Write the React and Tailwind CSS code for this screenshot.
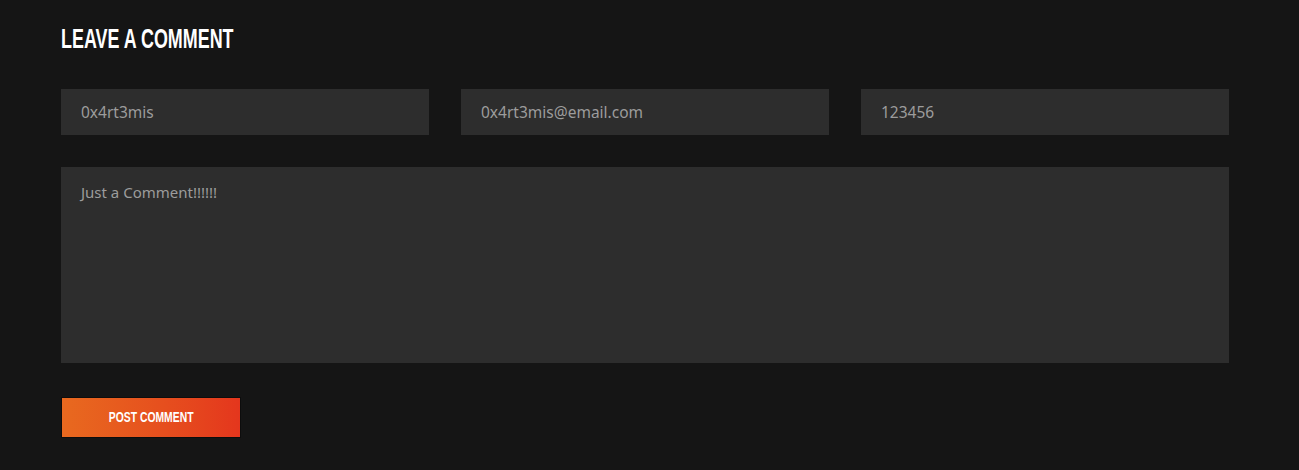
import { useState } from 'react';

function App() {
  const [form, setForm] = useState({
    name: '0x4rt3mis',
    email: '0x4rt3mis@email.com',
    phone: '123456',
    comment: 'Just a Comment!!!!!!',
  });

  const update = (field, value) => {
    setForm(prev => ({ ...prev, [field]: value }));
  };

  const fieldClass =
    "w-full h-[46px] bg-[#2d2d2d] text-[#9c9c9c] px-5 text-[15.5px] font-['Noto_Sans',sans-serif] outline-none";

  return (
    <div className="w-full min-h-[470px] bg-[#151515]">
      <div className="w-[1168px] ml-[61px] pt-[24px]">
        {/* Heading - narrow display face squeezed from Liberation Sans */}
        <h2 className="h-[30px] text-white text-[28px] leading-[30px] font-bold uppercase font-['Liberation_Sans',Arial,sans-serif]">
          <span className="inline-block origin-left scale-x-[0.64] whitespace-nowrap">Leave a Comment</span>
        </h2>

        {/* Inputs */}
        <div className="grid grid-cols-3 gap-8 mt-[35px]">
          <input
            type="text"
            value={form.name}
            onChange={(e) => update('name', e.target.value)}
            className={fieldClass}
          />
          <input
            type="email"
            value={form.email}
            onChange={(e) => update('email', e.target.value)}
            className={fieldClass}
          />
          <input
            type="text"
            value={form.phone}
            onChange={(e) => update('phone', e.target.value)}
            className={fieldClass}
          />
        </div>

        <textarea
          value={form.comment}
          onChange={(e) => update('comment', e.target.value)}
          className="block w-full h-[196px] mt-8 bg-[#2d2d2d] text-[#9c9c9c] px-5 py-[14px] text-[15px] leading-[22px] font-['Noto_Sans',sans-serif] outline-none resize-none"
        />

        {/* Submit */}
        <button className="mt-[34px] w-[180px] h-[41px] border border-[#0d0d0d] bg-linear-to-r from-[#e8691f] to-[#e4361d] text-white text-[14px] font-bold uppercase font-['Liberation_Sans',Arial,sans-serif]">
          <span className="inline-block scale-x-[0.74] whitespace-nowrap">Post Comment</span>
        </button>
      </div>
    </div>
  );
}

export default App;
